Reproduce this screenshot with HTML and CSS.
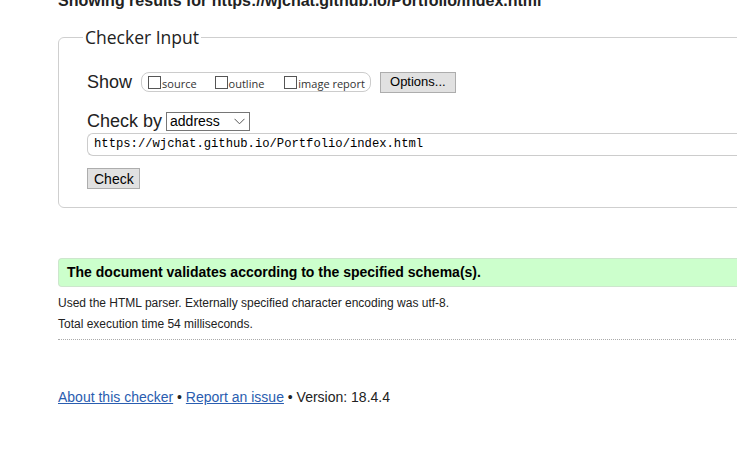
FILE: index.html
```html
<!DOCTYPE html>
<html lang="en">
<head>
<meta charset="utf-8">
<title>Nu Html Checker</title>
<link rel="stylesheet" href="styles.css">
</head>
<body>
<div class="page">
  <h2 class="results">Showing results for https://wjchat.github.io/Portfolio/index.html</h2>
  <fieldset class="checker">
    <legend class="legend">Checker Input</legend>
    <div class="row show-row">
      <span class="label">Show</span>
      <span class="group">
        <label class="opt"><input type="checkbox" class="cb"><span>source</span></label>
        <label class="opt"><input type="checkbox" class="cb"><span>outline</span></label>
        <label class="opt"><input type="checkbox" class="cb"><span>image report</span></label>
      </span>
      <button class="btn options">Options...</button>
    </div>
    <div class="row by-row">
      <span class="label">Check by</span>
      <span class="select">address
        <svg class="chev" width="11" height="7" viewBox="0 0 11 7"><path d="M0.5 0.8 L5.5 5.8 L10.5 0.8" fill="none" stroke="#555" stroke-width="1"/></svg>
      </span>
    </div>
    <div class="url">https://wjchat.github.io/Portfolio/index.html</div>
    <button class="btn check">Check</button>
  </fieldset>
  <p class="success">The document validates according to the specified schema(s).</p>
  <p class="info">Used the HTML parser. Externally specified character encoding was utf-8.</p>
  <p class="info">Total execution time 54 milliseconds.</p>
  <hr class="dots">
  <p class="footer"><a href="#">About this checker</a> • <a href="#">Report an issue</a> • Version: 18.4.4</p>
</div>
</body>
</html>
```
FILE: styles.css
```css
html { overflow: hidden; background: #fff; }
body { margin: 0; font-family: "Liberation Sans", Arial, sans-serif; color: #222; }
.page { padding-left: 58px; width: 760px; }
.results { font-size: 16px; font-weight: bold; margin: -9px 0 0; line-height: 19px; color: #222; }
.checker {
  margin: 15px 0 0 0; border: 1px solid #cfcfcf; border-radius: 6px;
  padding: 0 0 18px 28px; min-width: 0;
}
.legend {
  font-family: "Open Sans", "Noto Sans", sans-serif; font-size: 17.5px; color: #222;
  padding: 0 2px; margin-left: -4px; line-height: 24px;
}
.row { display: flex; align-items: center; }
.show-row { margin-top: 23px; height: 20px; }
.label { font-size: 18px; color: #222; white-space: nowrap; }
.show-row .label { margin-right: 9px; }
.group {
  display: flex; align-items: center; height: 18px; border: 1px solid #ccc; border-radius: 8px;
  padding: 0 5px 0 6px; white-space: nowrap; flex: none;
}
.opt { display: flex; align-items: center; font-family: "Open Sans", "Noto Sans", sans-serif; font-size: 11px; color: #333; margin-right: 18px; white-space: nowrap; }
.opt span { padding-top: 2px; }
.opt:nth-child(2) { margin-right: 20px; }
.opt:last-child { margin-right: 0; }
.cb { appearance: none; -webkit-appearance: none; width: 13px; height: 13px; border: 1px solid #555; margin: 0 1px 0 0; background: #fff; box-sizing: border-box; flex: none; }
.btn {
  font-family: "Liberation Sans", Arial, sans-serif; font-size: 13px; color: #000;
  background: #e1e1e1; border: 1px solid #adadad; border-radius: 0; padding: 0 6px; line-height: 18px;
}
.options { margin-left: 9px; width: 76px; height: 21px; flex: none; }
.by-row { margin-top: 19px; height: 20px; }
.by-row .label { margin-right: 4px; }
.select {
  display: flex; align-items: center; justify-content: space-between; width: 84px; height: 19px; box-sizing: border-box;
  border: 1px solid #767676; font-size: 14px; color: #000; padding: 0 4px 0 3px;
}
.url {
  margin-top: 2px; height: 23px; box-sizing: border-box; border: 1px solid #ccc; border-right: 0; border-radius: 6px 0 0 6px;
  font-family: "Liberation Mono", monospace; font-size: 12.2px; color: #000; padding-left: 6px; line-height: 21px;
}
.check { margin-top: 12px; width: 53px; height: 21px; font-size: 14px; display: block; }
.success {
  margin: 50px 0 0; height: 29px; box-sizing: border-box; background: #ccffcc; border: 1px solid #cde6cd; border-right: 0;
  border-radius: 4px 0 0 4px; font-weight: bold; font-size: 14px; color: #000; padding-left: 8px; line-height: 27px;
}
.info { margin: 0; font-size: 12px; line-height: 21px; color: #222; }
.success + .info { margin-top: 6px; }
.dots { margin: 4px 0 0; border: 0; border-top: 1px dotted #aaa; height: 0; }
.footer { margin: 49px 0 0; font-size: 14px; color: #222; }
.footer a { color: #2a5db0; }
```
